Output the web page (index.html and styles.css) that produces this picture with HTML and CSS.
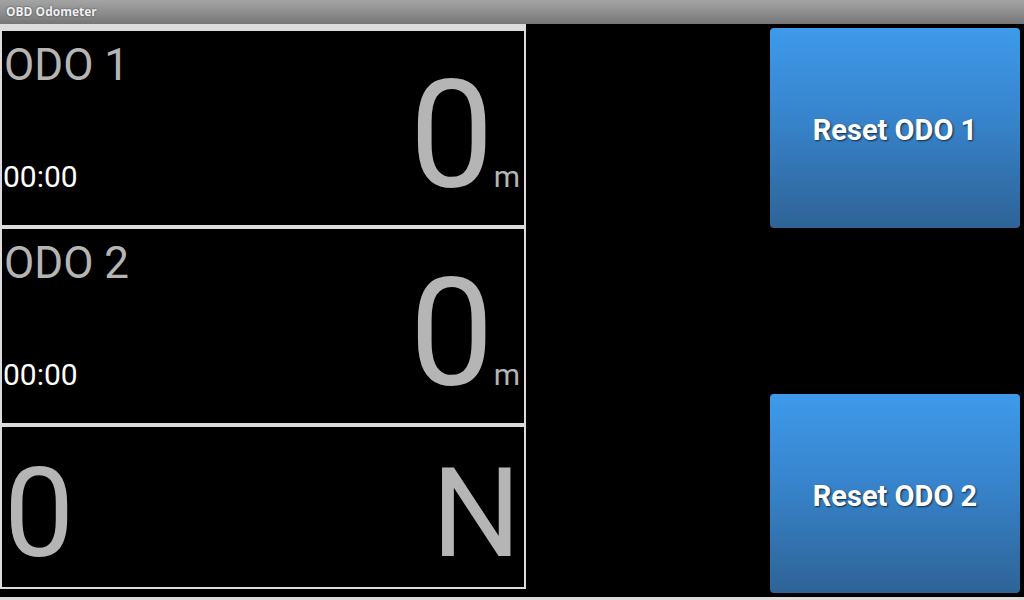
FILE: index.html
```html
<!DOCTYPE html>
<html>
<head>
    <meta charset="UTF-8">
    <title>OBD Odometer</title>
    <link rel="stylesheet" href="styles.css">
</head>
<body>
    <div class="titlebar">OBD Odometer</div>

    <div class="main">
        <div class="gauges">
            <div class="panel odo first">
                <div class="odo-name">ODO 1</div>
                <div class="odo-row">
                    <span class="odo-time">00:00</span>
                    <span class="odo-value">0<span class="odo-unit">m</span></span>
                </div>
            </div>
            <div class="panel odo">
                <div class="odo-name">ODO 2</div>
                <div class="odo-row">
                    <span class="odo-time">00:00</span>
                    <span class="odo-value">0<span class="odo-unit">m</span></span>
                </div>
            </div>
            <div class="panel status">
                <span class="status-speed">0</span>
                <span class="status-gear">N</span>
            </div>
        </div>

        <div class="actions">
            <button class="reset-btn" id="resetOdo1">Reset ODO 1</button>
            <button class="reset-btn second" id="resetOdo2">Reset ODO 2</button>
        </div>
    </div>

    <div class="bottom-edge"></div>
</body>
</html>
```

FILE: styles.css
```css
:root {
    --panel-border: #dcdcdc;
    --dim-text: #b5b5b5;
}

body {
    margin: 0;
    background: #000;
    font-family: Roboto, 'Liberation Sans', sans-serif;
    height: 600px;
    overflow: hidden;
}

.titlebar {
    height: 24px;
    line-height: 24px;
    padding-left: 6px;
    font-family: 'Open Sans', 'DejaVu Sans', sans-serif;
    font-size: 12px;
    font-weight: 700;
    color: #f2f2f2;
    text-shadow: 0 0 2px rgba(0, 0, 0, 0.6);
    background: linear-gradient(to bottom, #a4a4a4, #8a8a8a 60%, #767676);
}

.main {
    display: flex;
    height: 573px;
}

.gauges {
    width: 526px;
    display: flex;
    flex-direction: column;
}

.panel {
    border: 2px solid var(--panel-border);
    box-sizing: border-box;
}

.odo {
    height: 198px;
    display: flex;
    flex-direction: column;
    justify-content: space-between;
}

.odo.first {
    height: 203px;
    border-top-width: 7px;
}

.odo-name {
    font-size: 44px;
    line-height: 1;
    color: var(--dim-text);
    padding: 12px 0 0 2px;
}

.odo-row {
    display: flex;
    justify-content: space-between;
    align-items: baseline;
    padding: 0 4px 33px 1px;
}

.odo-time {
    font-size: 30px;
    line-height: 1;
    color: #fff;
}

.odo-value {
    font-size: 150px;
    line-height: 80px;
    color: var(--dim-text);
}

.odo-unit {
    font-size: 30px;
    line-height: 1;
}

.status {
    height: 164px;
    display: flex;
    justify-content: space-between;
    align-items: flex-end;
    padding: 0 3px 11px 2px;
    font-size: 125px;
    line-height: 1;
    color: var(--dim-text);
}

.actions {
    flex: 1;
    display: flex;
    flex-direction: column;
    justify-content: space-between;
    align-items: flex-end;
    padding: 4px 4px 4px 0;
}

.reset-btn {
    width: 250px;
    height: 200px;
    border: none;
    border-radius: 4px;
    background: linear-gradient(to bottom, #3e9aea, #3784cc 45%, #2e6396);
    font-family: Roboto, 'Liberation Sans', sans-serif;
    font-size: 29px;
    font-weight: 700;
    color: #fff;
    text-shadow: 1px 1px 2px rgba(0, 0, 0, 0.7);
    padding: 4px 0 0 0;
    cursor: pointer;
}

.reset-btn.second {
    height: 199px;
}

.bottom-edge {
    height: 3px;
    background: var(--panel-border);
}
```
